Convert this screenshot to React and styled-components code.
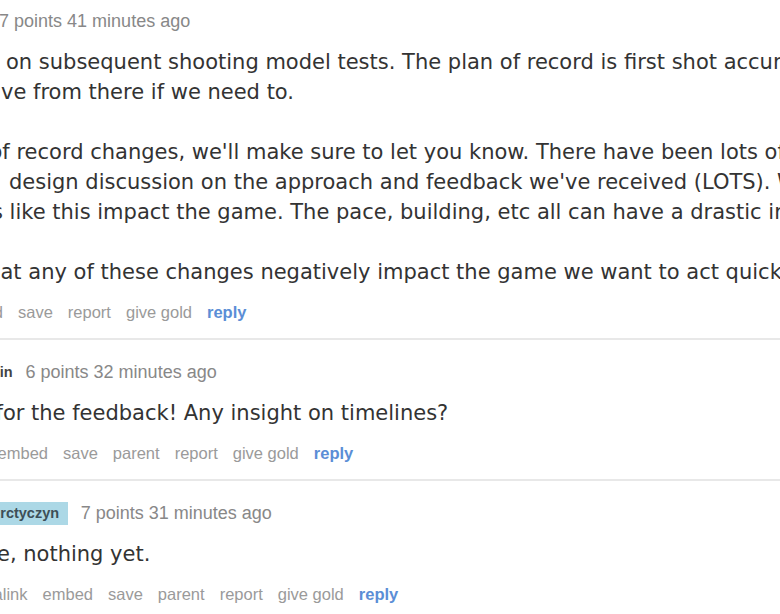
import React from 'react';
import styled, { createGlobalStyle, css } from 'styled-components';

const GlobalStyle = createGlobalStyle`
  html, body {
    margin: 0;
    padding: 0;
    background: #fff;
    overflow: hidden;
  }
  body {
    font-family: "Liberation Sans", Arial, sans-serif;
  }
`;

// the thread is scrolled sideways, its left edge sits outside the window
const Page = styled.div`
  margin: 9px 0 0 -134px;
`;

const Comment = styled.div`
  ${(p) =>
    p.$child &&
    css`
      border-top: 2px solid #e8e8e8;
      padding-top: 20px;
    `}
`;

const Children = styled.div`
  margin-left: 45px;
`;

const Entry = styled.div`
  padding-bottom: 14px;
`;

const Tagline = styled.div`
  display: flex;
  align-items: center;
  gap: 13px;
  height: 24px;
  white-space: nowrap;
`;

const Author = styled.span`
  font-size: 14.5px;
  font-weight: bold;
  color: #444;
  ${(p) =>
    p.$op &&
    css`
      background: #acd8e6;
      color: #3d4f57;
      padding: 0 8.6px 0 8px;
      line-height: 23px;
    `}
`;

const Score = styled.span`
  font-size: 18px;
  color: #888;
`;

const Body = styled.div`
  margin-top: 14px;
  font-family: "DejaVu Sans", Verdana, sans-serif;
  font-size: 21px;
  line-height: 30px;
  color: #333;
  white-space: nowrap;
`;

const Para = styled.p`
  margin: 0;
  & + & {
    margin-top: 30px;
  }
`;

const Line = styled.div`
  text-indent: ${(p) => p.$x}px;
`;

const Actions = styled.ul`
  display: flex;
  gap: 15px;
  margin: 13px 0 0;
  padding: 0;
  list-style: none;
  font-size: 16.5px;
  line-height: 24px;
  color: #9a9a9a;
  white-space: nowrap;
`;

const Action = styled.li`
  ${(p) =>
    p.$primary &&
    css`
      color: #5b8ed6;
      font-weight: bold;
    `}
`;

const ActionList = ({ parent }) => (
  <Actions>
    <Action>permalink</Action>
    <Action>embed</Action>
    <Action>save</Action>
    {parent && <Action>parent</Action>}
    <Action>report</Action>
    <Action>give gold</Action>
    <Action $primary>reply</Action>
  </Actions>
);

const App = () => (
  <>
    <GlobalStyle />
    <Page>
      <Comment>
        <Entry>
          <Tagline>
            <Author>EpicStephenCruz</Author>
            <Score>7 points 41 minutes ago</Score>
          </Tagline>
          <Body>
            <Para>
              <Line $x={140}>on subsequent shooting model tests. The plan of record is first shot accuracy</Line>
              <Line $x={135}>ve from there if we need to.</Line>
            </Para>
            <Para>
              <Line $x={123.5}>of record changes, we'll make sure to let you know. There have been lots of</Line>
              <Line $x={143}>design discussion on the approach and feedback we've received (LOTS). We</Line>
              <Line $x={126}>s like this impact the game. The pace, building, etc all can have a drastic impact</Line>
            </Para>
            <Para>
              <Line $x={134.5}>at any of these changes negatively impact the game we want to act quickly</Line>
            </Para>
          </Body>
          <ActionList />
        </Entry>
        <Children>
          <Comment $child>
            <Entry>
              <Tagline>
                <Author>JacksonMartin</Author>
                <Score>6 points 32 minutes ago</Score>
              </Tagline>
              <Body>
                <Para>
                  <Line $x={84.5}>for the feedback! Any insight on timelines?</Line>
                </Para>
              </Body>
              <ActionList parent />
            </Entry>
            <Children>
              <Comment $child>
                <Entry>
                  <Tagline>
                    <Author $op>Mr_Arctyczyn</Author>
                    <Score>7 points 31 minutes ago</Score>
                  </Tagline>
                  <Body>
                    <Para>
                      <Line $x={41}>e, nothing yet.</Line>
                    </Para>
                  </Body>
                  <ActionList parent />
                </Entry>
              </Comment>
            </Children>
          </Comment>
        </Children>
      </Comment>
    </Page>
  </>
);

export default App;
